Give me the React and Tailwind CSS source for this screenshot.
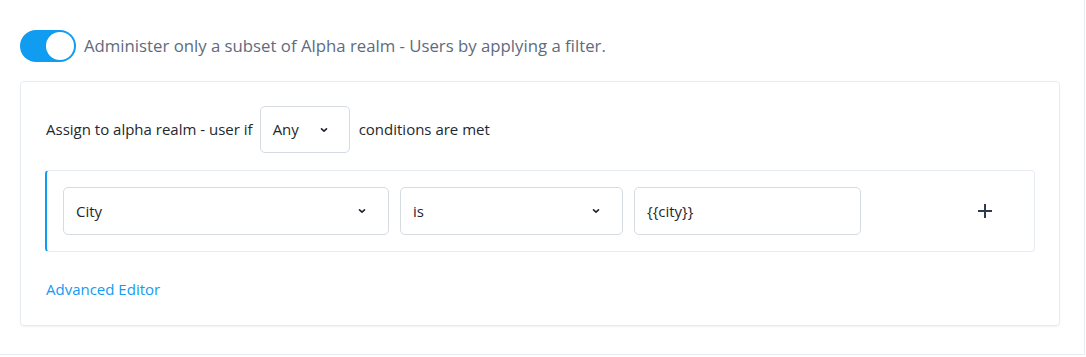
import React, { useState } from "react";

function Chevron() {
  return (
    <svg width="10" height="10" viewBox="0 0 10 10" className="shrink-0">
      <path d="M2.5 3.8 L5 6.2 L7.5 3.8" fill="none" stroke="#1f2630" strokeWidth="1.6" strokeLinecap="round" strokeLinejoin="round" />
    </svg>
  );
}

function SelectBox({ value, className }) {
  return (
    <div className={`flex items-center justify-between border border-[#d6dbe2] rounded-[5px] bg-white pl-3 ${className}`}>
      <span className="text-[#23282e]">{value}</span>
      <Chevron />
    </div>
  );
}

export default function App() {
  const [enabled, setEnabled] = useState(true);

  return (
    <div
      className="w-[1085px] h-[355px] bg-white border-r border-b border-[#e7ecf2] px-5 pt-[30px] text-[15px]"
      style={{ fontFamily: '"Open Sans", "Noto Sans", sans-serif' }}
    >
      {/* Toggle */}
      <div className="flex items-center gap-2">
        <button
          onClick={() => setEnabled(!enabled)}
          className={`w-[56px] h-[32px] rounded-full p-[2px] flex ${enabled ? "bg-[#109cf1] justify-end" : "bg-gray-300 justify-start"}`}
        >
          <span className="w-[28px] h-[28px] rounded-full bg-white block" />
        </button>
        <span className="text-[#5e6b7e] text-[16.75px] leading-6">
          Administer only a subset of Alpha realm - Users by applying a filter.
        </span>
      </div>

      {/* Card */}
      <div className="mt-[19px] w-[1040px] border border-[#e7ecf2] rounded-[4px] shadow-[0_1px_2px_rgba(0,0,0,0.06)] px-6 pt-6 pb-6">
        <div className="flex items-center h-[47px] text-[#23282e]">
          <span className="pl-px">Assign to alpha realm - user if</span>
          <SelectBox value="Any" className="w-[90px] h-[47px] ml-[7px] pr-[20px]" />
          <span className="ml-[9px]">conditions are met</span>
        </div>

        <div className="mt-[17px] flex items-center border border-[#e7ecf2] border-l-2 border-l-[#109cf1] rounded-[4px] pl-4 py-4">
          <SelectBox value="City" className="w-[326px] h-[48px] pr-[21px]" />
          <SelectBox value="is" className="w-[223px] h-[48px] ml-[11px] pr-[21px]" />
          <div className="w-[227px] h-[48px] ml-[11px] border border-[#d6dbe2] rounded-[5px] flex items-center pl-3 text-[#23282e]">
            {"{{city}}"}
          </div>
          <button className="ml-[104px] w-[40px] h-[40px] flex items-center justify-center">
            <svg width="16" height="16" viewBox="0 0 16 16">
              <path d="M8 1 V15 M1 8 H15" stroke="#2e3a4d" strokeWidth="2" />
            </svg>
          </button>
        </div>

        <div className="mt-[26px] pl-px">
          <a className="text-[#109cf1] cursor-pointer">Advanced Editor</a>
        </div>
      </div>
    </div>
  );
}
